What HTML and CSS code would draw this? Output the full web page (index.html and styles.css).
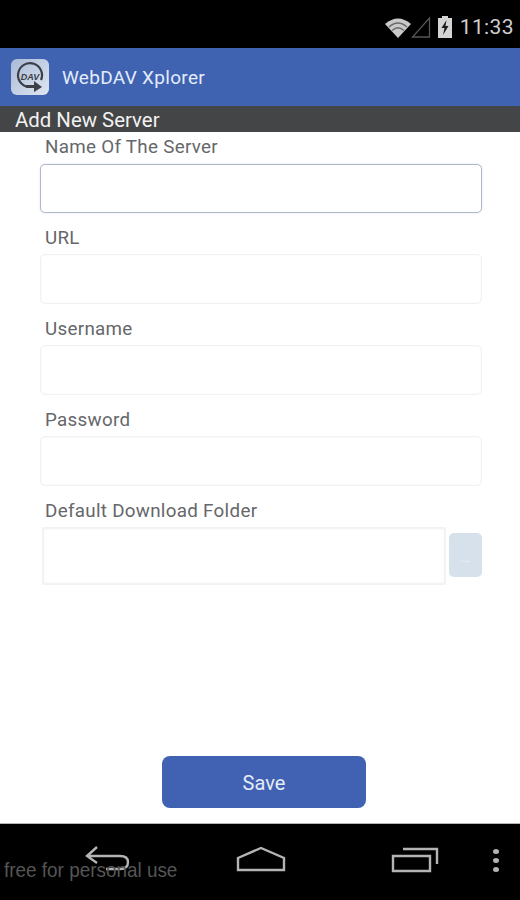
FILE: index.html
```html
<!DOCTYPE html>
<html lang="en">
<head>
<meta charset="utf-8">
<title>WebDAV Xplorer</title>
<link rel="stylesheet" href="styles.css">
</head>
<body>
<div class="screen">
  <header class="status">
    <svg class="wifi" width="28" height="24" viewBox="0 0 28 24"><path d="M1 9 Q14 -2 27 9 L14 23Z" fill="#c9c9c9"/><path d="M5 12Q14 4 23 12M8 15.5Q14 10 20 15.5" fill="none" stroke="#6a6a6a" stroke-width="1.2"/></svg>
    <svg class="signal" width="20" height="24" viewBox="0 0 20 24"><path d="M18.5 3V22H1.5Z" fill="none" stroke="#555" stroke-width="1.3"/></svg>
    <svg class="battery" width="16" height="22" viewBox="0 0 16 22"><path d="M5 0H11V2H15V22H1V2H5Z" fill="#d4d4d4"/><path d="M9.5 4L4.5 12H7.5L6 19L11.5 10H8.5Z" fill="#1c1c1c"/></svg>
    <span class="time">11:33</span>
  </header>
  <div class="appbar">
    <span class="logo">
      <svg width="38" height="36" viewBox="0 0 38 36">
        <defs><linearGradient id="lg" x1="0" y1="0" x2="1" y2="1"><stop offset="0" stop-color="#a9bad6"/><stop offset="1" stop-color="#dfe6f1"/></linearGradient></defs>
        <rect width="38" height="36" rx="6" fill="url(#lg)"/>
        <path d="M30 21A12 12 0 1 0 17 28" fill="none" stroke="#3b3f47" stroke-width="2.2"/>
        <path d="M15 26H23V22L31 28L23 33V29H15Z" fill="#3b3f47"/>
        <text x="19" y="21" class="logo-text">DAV</text>
      </svg>
    </span>
    <span class="appname">WebDAV Xplorer</span>
  </div>
  <div class="subhead">Add New Server</div>
  <main class="main">
    <form class="form">
      <div class="field">
        <label class="label">Name Of The Server</label>
        <div class="input input-focus"></div>
      </div>
      <div class="field">
        <label class="label">URL</label>
        <div class="input"></div>
      </div>
      <div class="field">
        <label class="label">Username</label>
        <div class="input"></div>
      </div>
      <div class="field">
        <label class="label">Password</label>
        <div class="input"></div>
      </div>
      <div class="field">
        <label class="label">Default Download Folder</label>
        <div class="folder-row">
          <div class="input input-folder"></div>
          <div class="browse">...</div>
        </div>
      </div>
    </form>
    <div class="actions"><div class="save">Save</div></div>
  </main>
  <footer class="nav">
    <svg class="nav-back" width="48" height="28" viewBox="0 0 48 28"><path d="M13 1L3 10L13 17M3 10H36Q44 10 44 16Q44 23 36 23H22" fill="none" stroke="#b4b4b4" stroke-width="2.4"/></svg>
    <svg class="nav-home" width="50" height="26" viewBox="0 0 50 26"><path d="M2 12L25 2L48 12V24H2Z" fill="none" stroke="#b4b4b4" stroke-width="2.4"/></svg>
    <svg class="nav-recent" width="48" height="26" viewBox="0 0 48 26"><path d="M2 9H39V24H2Z" fill="none" stroke="#b4b4b4" stroke-width="2.4"/><path d="M12 2H46V17" fill="none" stroke="#b4b4b4" stroke-width="2.4"/></svg>
    <span class="nav-menu"><i class="dot"></i><i class="dot"></i><i class="dot"></i></span>
    <span class="watermark">free for personal use</span>
  </footer>
</div>
</body>
</html>
```
FILE: styles.css
```css
* { box-sizing: border-box; }
html, body { margin: 0; padding: 0; }
body { width: 520px; height: 900px; overflow: hidden; background: #fff; font-family: Roboto, "Noto Sans", sans-serif; }
.screen { width: 520px; height: 900px; display: flex; flex-direction: column; }
.status { height: 48px; flex: none; background: #000; display: flex; align-items: center; justify-content: flex-end; padding: 6px 6px 0 0; color: #c8c8c8; }
.signal { margin-left: -1px; }
.battery { margin-left: 6px; margin-right: 7px; }
.time { font-size: 21px; letter-spacing: 0.4px; color: #cfcfcf; }
.appbar { height: 58px; flex: none; background: #3f62b1; display: flex; align-items: center; padding-left: 11px; }
.logo { width: 38px; height: 36px; display: block; margin-right: 13px; }
.logo svg { display: block; }
.logo-text { font-family: "Liberation Sans", sans-serif; font-size: 9px; font-weight: 700; font-style: italic; fill: #3b3f47; text-anchor: middle; }
.appname { font-size: 19px; color: #e2ecfa; letter-spacing: 0.3px; }
.subhead { height: 26px; flex: none; background: #444547; color: #f2f2f2; font-size: 20.4px; line-height: 29px; padding-left: 15px; overflow: hidden; }
.main { flex: 1; display: flex; flex-direction: column; background: #fff; }
.form { padding: 0 38px 0 40px; display: flex; flex-direction: column; }
.field { height: 91px; display: flex; flex-direction: column; }
.field:first-child { height: 81px; }
.label { display: block; flex: none; height: 30px; padding-left: 5px; font-size: 18.8px; line-height: 29px; color: #65676a; letter-spacing: 0.3px; margin-top: 11px; }
.field:first-child .label { height: 32px; margin-top: 0; line-height: 30px; }
.field .input { height: 50px; }
.input { border: 1px solid #f0f1f2; border-radius: 5px; background: #fff; box-shadow: inset 0 0 2px #f2f2f2; }
.field .input-focus { height: 49px; border: 1.5px solid #b0b8ca; box-shadow: 0 0 2px #d5dbe8; }
.folder-row { display: flex; align-items: flex-start; padding-left: 2px; gap: 3px; }
.field .input-folder { width: 404px; height: 58px; border-radius: 2px; border: 2px solid #f3f3f3; }
.browse { width: 33px; height: 44px; flex: none; margin-top: 6px; background: #d7e1ec; border-radius: 5px; color: #f2f5f8; font-size: 12px; text-align: center; line-height: 50px; }
.actions { margin-top: auto; padding-bottom: 15px; padding-left: 162px; }
.save { width: 204px; height: 52px; background: #4162b2; border-radius: 8px; color: #e4ecf8; font-size: 20px; text-align: center; line-height: 54px; }
.nav { height: 77px; flex: none; background: #000; border-top: 1px solid #b5b5b5; position: relative; display: grid; grid-template-columns: 216px 92px 1fr; }
.nav-back { margin: 22px 0 0 84px; }
.nav-home { margin: 22px 0 0 20px; }
.nav-recent { position: absolute; left: 391px; top: 23px; }
.nav-menu { position: absolute; left: 493px; top: 25px; display: flex; flex-direction: column; gap: 4px; }
.dot { display: block; width: 6px; height: 5px; border-radius: 50%; background: #b4b4b4; }
.watermark { position: absolute; left: 4px; top: 34px; font-size: 21px; color: #555; font-family: "Liberation Sans", sans-serif; transform-origin: left center; transform: scaleX(0.9); white-space: nowrap; }
```
